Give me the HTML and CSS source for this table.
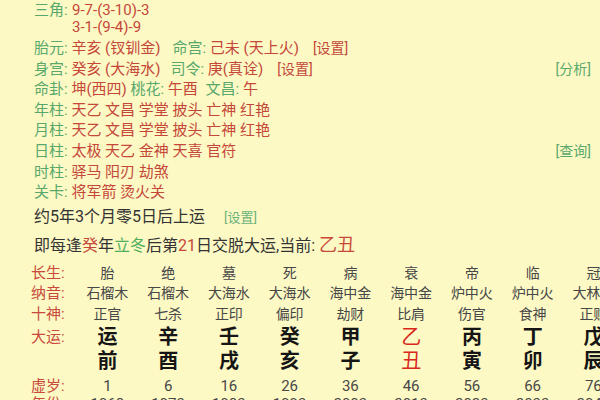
FILE: index.html
```html
<!DOCTYPE html>
<html lang="zh">
<head>
<meta charset="utf-8">
<link rel="stylesheet" href="styles.css">
</head>
<body>
<div class="page">
  <div class="top">
    <div class="sanjiao">
      <span class="lbl">三角:</span>
      <div class="vals">
        <div class="val">9-7-(3-10)-3</div>
        <div class="val">3-1-(9-4)-9</div>
      </div>
    </div>
    <div class="row"><div><span class="lbl">胎元:</span> <span class="val">辛亥 (钗钏金)</span><span class="lbl gap">命宫:</span> <span class="val">己未 (天上火)</span><span class="link red">[设置]</span></div></div>
    <div class="row"><div><span class="lbl">身宫:</span> <span class="val">癸亥 (大海水)</span><span class="lbl gap2">司令:</span> <span class="val">庚(真诠)</span><span class="link red">[设置]</span></div><span class="link green">[分析]</span></div>
    <div class="row"><div><span class="lbl">命卦:</span> <span class="val">坤(西四)</span> <span class="lbl">桃花:</span> <span class="val">午酉</span> <span class="lbl gap3">文昌:</span> <span class="val">午</span></div></div>
    <div class="row"><div><span class="lbl">年柱:</span> <span class="val">天乙 文昌 学堂 披头 亡神 红艳</span></div></div>
    <div class="row"><div><span class="lbl">月柱:</span> <span class="val">天乙 文昌 学堂 披头 亡神 红艳</span></div></div>
    <div class="row"><div><span class="lbl">日柱:</span> <span class="val">太极 天乙 金神 天喜 官符</span></div><span class="link green">[查询]</span></div>
    <div class="row"><div><span class="lbl">时柱:</span> <span class="val">驿马 阳刃 劫煞</span></div></div>
    <div class="row"><div><span class="lbl">关卡:</span> <span class="val">将军箭 烫火关</span></div></div>
  </div>

  <div class="yun">
    <div class="yrow">约5年3个月零5日后上运<span class="set">[设置]</span></div>
    <div class="yrow">即每逢<span class="r">癸</span>年<span class="g">立冬</span>后第<span class="r">21</span>日交脱大运,当前: <span class="cur">乙丑</span></div>
  </div>

  <div class="tbl">
    <div class="trow">
      <span class="tl">长生:</span><span>胎</span><span>绝</span><span>墓</span><span>死</span><span>病</span><span>衰</span><span>帝</span><span>临</span><span>冠</span>
    </div>
    <div class="trow">
      <span class="tl">纳音:</span><span>石榴木</span><span>石榴木</span><span>大海水</span><span>大海水</span><span>海中金</span><span>海中金</span><span>炉中火</span><span>炉中火</span><span>大林木</span>
    </div>
    <div class="trow">
      <span class="tl">十神:</span><span>正官</span><span>七杀</span><span>正印</span><span>偏印</span><span>劫财</span><span>比肩</span><span>伤官</span><span>食神</span><span>正财</span>
    </div>
    <div class="trow big">
      <span class="tl">大运:</span>
      <span>运<br>前</span><span>辛<br>酉</span><span>壬<br>戌</span><span>癸<br>亥</span><span>甲<br>子</span><span class="now">乙<br>丑</span><span>丙<br>寅</span><span>丁<br>卯</span><span>戊<br>辰</span>
    </div>
    <div class="trow age">
      <span class="tl">虚岁:</span><span>1</span><span>6</span><span>16</span><span>26</span><span>36</span><span>46</span><span>56</span><span>66</span><span>76</span>
    </div>
    <div class="trow year">
      <span class="tl">年份:</span><span>1968</span><span>1973</span><span>1983</span><span>1993</span><span>2003</span><span>2013</span><span>2023</span><span>2033</span><span>2043</span>
    </div>
  </div>
</div>
</body>
</html>
```

FILE: styles.css
```css
html, body {
  margin: 0;
  padding: 0;
}
body {
  width: 600px;
  height: 400px;
  overflow: hidden;
  background: #fdf9c4;
  font-family: Roboto, "Noto Sans CJK SC", sans-serif;
}
.page {
  padding-top: 2px;
}
.top {
  padding-left: 34px;
  padding-right: 9px;
  font-size: 15px;
}
.lbl {
  color: #58a86c;
}
.val {
  color: #c4473a;
}
.sanjiao {
  display: flex;
  line-height: 17px;
  margin-bottom: 2px;
}
.sanjiao .lbl {
  width: 38px;
}
.row {
  display: flex;
  justify-content: space-between;
  line-height: 20.6px;
  white-space: pre;
}
.gap { margin-left: 12px; }
.gap2 { margin-left: 10px; }
.gap3 { margin-left: 4px; }
.link {
  font-size: 14px;
}
.link.red {
  color: #c4473a;
  margin-left: 14px;
}
.link.green {
  color: #5aa86c;
}
.yun {
  padding-left: 34px;
  margin-top: 1.5px;
  font-size: 16px;
  color: #333;
}
.yrow {
  line-height: 26.5px;
  white-space: pre;
}
.set {
  color: #6ab27a;
  font-size: 13px;
  margin-left: 19px;
}
.r { color: #c4473a; }
.g { color: #4fae5c; }
.cur {
  color: #c8493a;
  font-size: 18px;
}
.tbl {
  padding-left: 31px;
  margin-top: 3.5px;
  font-size: 14px;
  color: #474747;
}
.trow {
  display: grid;
  grid-template-columns: 46px repeat(9, 60.75px);
  line-height: 20.5px;
  text-align: center;
  white-space: nowrap;
}
.trow .tl {
  text-align: left;
  color: #c9493d;
  font-size: 15px;
}
.trow.big {
  line-height: 24px;
  font-size: 20px;
  font-weight: 700;
  color: #151515;
  margin-top: 1px;
}
.trow.big .tl {
  font-weight: 400;
}
.trow.big .now {
  color: #d8281c;
  font-weight: 400;
}
.trow.age {
  line-height: 20px;
  margin-top: 3px;
  font-size: 15px;
}
.trow.year {
  line-height: 16px;
  font-size: 15px;
}
```
